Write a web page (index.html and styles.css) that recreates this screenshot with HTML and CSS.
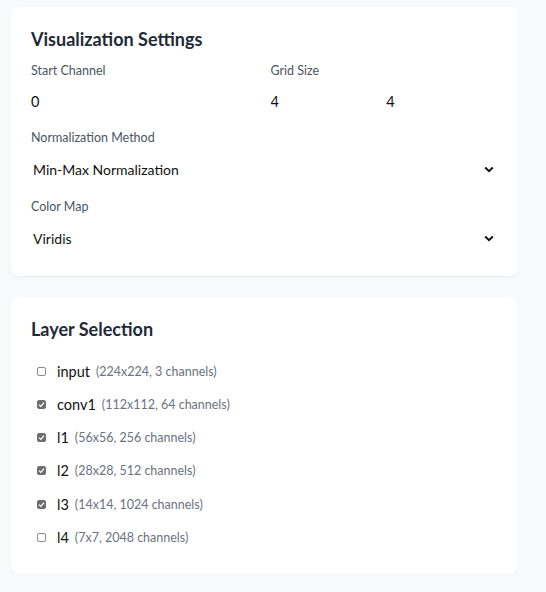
FILE: index.html
```html
<!DOCTYPE html>
<html lang="en">
<head>
<meta charset="utf-8">
<title>Visualization Settings</title>
<link rel="stylesheet" href="styles.css">
</head>
<body>
<main class="page">
  <section class="card settings">
    <h2 class="card-title">Visualization Settings</h2>
    <div class="row-2">
      <div class="field">
        <label class="field-label">Start Channel</label>
        <input class="plain-input" type="text" value="0">
      </div>
      <div class="field">
        <label class="field-label">Grid Size</label>
        <div class="pair">
          <input class="plain-input" type="text" value="4">
          <input class="plain-input" type="text" value="4">
        </div>
      </div>
    </div>
    <div class="field">
      <label class="field-label">Normalization Method</label>
      <div class="select">
        <span class="select-value">Min-Max Normalization</span>
        <svg class="chev" width="10" height="7" viewBox="0 0 10 7"><path d="M1.2 1.5 L5 5.2 L8.8 1.5" fill="none" stroke="#111" stroke-width="2"/></svg>
      </div>
    </div>
    <div class="field">
      <label class="field-label">Color Map</label>
      <div class="select">
        <span class="select-value">Viridis</span>
        <svg class="chev" width="10" height="7" viewBox="0 0 10 7"><path d="M1.2 1.5 L5 5.2 L8.8 1.5" fill="none" stroke="#111" stroke-width="2"/></svg>
      </div>
    </div>
  </section>

  <section class="card layers">
    <h2 class="card-title">Layer Selection</h2>
    <ul class="layer-list">
      <li class="layer"><span class="cb"></span><span class="layer-name">input</span><span class="layer-meta">(224x224, 3 channels)</span></li>
      <li class="layer"><span class="cb on"><svg width="7" height="7" viewBox="0 0 7 7"><path d="M1 3.6 L2.8 5.4 L6 1.6" fill="none" stroke="#fff" stroke-width="1.3"/></svg></span><span class="layer-name">conv1</span><span class="layer-meta">(112x112, 64 channels)</span></li>
      <li class="layer"><span class="cb on"><svg width="7" height="7" viewBox="0 0 7 7"><path d="M1 3.6 L2.8 5.4 L6 1.6" fill="none" stroke="#fff" stroke-width="1.3"/></svg></span><span class="layer-name">l1</span><span class="layer-meta">(56x56, 256 channels)</span></li>
      <li class="layer"><span class="cb on"><svg width="7" height="7" viewBox="0 0 7 7"><path d="M1 3.6 L2.8 5.4 L6 1.6" fill="none" stroke="#fff" stroke-width="1.3"/></svg></span><span class="layer-name">l2</span><span class="layer-meta">(28x28, 512 channels)</span></li>
      <li class="layer"><span class="cb on"><svg width="7" height="7" viewBox="0 0 7 7"><path d="M1 3.6 L2.8 5.4 L6 1.6" fill="none" stroke="#fff" stroke-width="1.3"/></svg></span><span class="layer-name">l3</span><span class="layer-meta">(14x14, 1024 channels)</span></li>
      <li class="layer"><span class="cb"></span><span class="layer-name">l4</span><span class="layer-meta">(7x7, 2048 channels)</span></li>
    </ul>
  </section>
</main>
</body>
</html>
```

FILE: styles.css
```css
* { box-sizing: border-box; }
html, body { margin: 0; padding: 0; }
body {
  background: #f8f9fb;
  font-family: Lato, "Noto Sans", sans-serif;
  color: #111;
}
.page {
  width: 507px;
  margin-left: 11px;
  padding-top: 7px;
  display: flex;
  flex-direction: column;
  gap: 21px;
}
.card {
  background: #fff;
  border-radius: 8px;
  box-shadow: 0 1px 2px rgba(0,0,0,0.05);
  padding: 20px;
}
.settings { height: 269px; }
.layers { height: 277px; }
.card-title {
  margin: 0 0 10px;
  font-size: 18px;
  line-height: 24px;
  font-weight: 700;
  color: #1f2937;
}
.row-2 {
  display: grid;
  grid-template-columns: 1fr 1fr;
  gap: 12px;
}
.field { display: flex; flex-direction: column; margin-bottom: 15px; }
.field-label {
  font-size: 12.5px;
  line-height: 20px;
  color: #4b5563;
  margin-bottom: 8px;
}
.pair { display: grid; grid-template-columns: 1fr 1fr; gap: 4px; }
.plain-input {
  border: none;
  padding: 0;
  margin: 0;
  height: 24px;
  font: inherit;
  font-size: 14.5px;
  color: #111;
  background: transparent;
  width: 100%;
  outline: none;
}
.select {
  display: flex;
  align-items: center;
  justify-content: space-between;
  height: 26px;
  padding: 0 4px 0 2px;
  font-size: 14px;
}
.chev { display: block; }
.layer-list {
  list-style: none;
  margin: 19.5px 0 0;
  padding: 0 0 0 6px;
  display: flex;
  flex-direction: column;
  gap: 12.3px;
}
.layer {
  display: flex;
  align-items: center;
  height: 21px;
}
.cb {
  width: 9px;
  height: 9px;
  border: 1px solid #8a8a8a;
  border-radius: 2px;
  margin-right: 11px;
  display: flex;
  align-items: center;
  justify-content: center;
  background: #fff;
}
.cb.on { background: #6e6e6e; border-color: #6e6e6e; }
.cb svg { display: block; }
.layer-name { font-size: 14.5px; color: #111; margin-right: 6px; }
.layer-meta { font-size: 12.5px; color: #6b7280; }
```
